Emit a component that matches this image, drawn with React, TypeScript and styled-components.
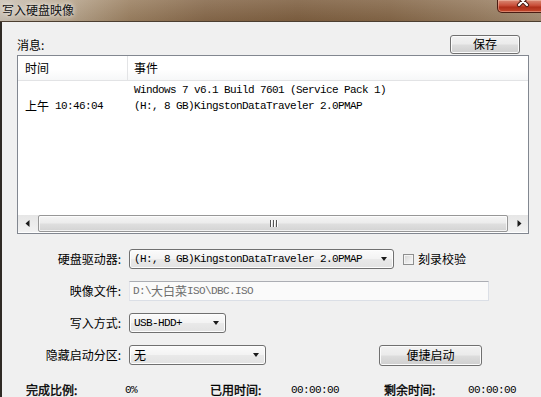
import React from "react";
import styled, { createGlobalStyle } from "styled-components";

const GlobalStyle = createGlobalStyle`
  html, body {
    margin: 0;
    padding: 0;
  }
  body {
    width: 541px;
    height: 397px;
    overflow: hidden;
    background: #f0f0f0;
    font-family: "Noto Sans CJK SC", "Liberation Sans", sans-serif;
    font-size: 12px;
    color: #000;
  }
`;

interface LogRow {
  time: string;
  event: string;
}

const rows: LogRow[] = [
  { time: "", event: "Windows 7 v6.1 Build 7601 (Service Pack 1)" },
  { time: "10:46:04", event: "(H:, 8 GB)KingstonDataTraveler 2.0PMAP" },
];

export default function App() {
  return (
    <>
      <GlobalStyle />
      <Window>
        <TitleBar>
          <Title>写入硬盘映像</Title>
          <CloseButton>
            <svg width="50" height="13" viewBox="0 0 50 13">
              <path d="M22 -2 L30 6 M30 -2 L22 6" stroke="#4a1a10" strokeWidth="4.2" strokeLinecap="round" />
              <path d="M22 -2 L30 6 M30 -2 L22 6" stroke="#fff" strokeWidth="2.2" strokeLinecap="round" />
            </svg>
          </CloseButton>
        </TitleBar>

        <Body>
          <TopRow>
            <Label>消息:</Label>
            <Button $width={70} $height={19}>保存</Button>
          </TopRow>

          <ListBox>
            <ListHeader>
              <HeaderCell $width={110} $divider>时间</HeaderCell>
              <HeaderCell>事件</HeaderCell>
            </ListHeader>
            <ListRows>
              {rows.map((row) => (
                <ListRow key={row.event}>
                  <TimeCell>
                    {row.time && (
                      <>
                        <Cjk>上午</Cjk>
                        <Mono> {row.time}</Mono>
                      </>
                    )}
                  </TimeCell>
                  <EventCell>{row.event}</EventCell>
                </ListRow>
              ))}
            </ListRows>
            <HScroll>
              <ScrollArrow>
                <svg width="5" height="7" viewBox="0 0 5 7">
                  <path d="M4.5 0 L0.5 3.5 L4.5 7 Z" fill="#1a1a1a" />
                </svg>
              </ScrollArrow>
              <ScrollThumb>
                <Grip>
                  <i />
                  <i />
                  <i />
                </Grip>
              </ScrollThumb>
              <ScrollArrow>
                <svg width="5" height="7" viewBox="0 0 5 7">
                  <path d="M0.5 0 L4.5 3.5 L0.5 7 Z" fill="#1a1a1a" />
                </svg>
              </ScrollArrow>
            </HScroll>
          </ListBox>

          <Form>
            <FormRow>
              <FieldLabel>硬盘驱动器:</FieldLabel>
              <Combo $width={265}>
                <Mono>(H:, 8 GB)KingstonDataTraveler 2.0PMAP</Mono>
                <DropArrow />
              </Combo>
              <CheckBox />
              <CheckLabel>刻录校验</CheckLabel>
            </FormRow>
            <FormRow>
              <FieldLabel>映像文件:</FieldLabel>
              <TextField>
                <Mono>D:\</Mono>
                <Cjk>大白菜</Cjk>
                <Mono>ISO\DBC.ISO</Mono>
              </TextField>
            </FormRow>
            <FormRow>
              <FieldLabel>写入方式:</FieldLabel>
              <Combo $width={97}>
                <Mono>USB-HDD+</Mono>
                <DropArrow />
              </Combo>
            </FormRow>
            <FormRow>
              <FieldLabel>隐藏启动分区:</FieldLabel>
              <Combo $width={137}>
                <Cjk>无</Cjk>
                <DropArrow />
              </Combo>
              <Button $width={103} $height={21} $offset={113}>便捷启动</Button>
            </FormRow>
          </Form>

          <StatusRow>
            <StatusLabel>完成比例:</StatusLabel>
            <Mono>0%</Mono>
            <StatusLabel>已用时间:</StatusLabel>
            <Mono>00:00:00</Mono>
            <StatusLabel>剩余时间:</StatusLabel>
            <Mono>00:00:00</Mono>
          </StatusRow>
        </Body>
      </Window>
    </>
  );
}

const Window = styled.div`
  width: 541px;
  height: 397px;
  display: flex;
  flex-direction: column;
  overflow: hidden;
`;

const TitleBar = styled.div`
  flex: none;
  height: 21px;
  display: flex;
  align-items: flex-start;
  justify-content: space-between;
  overflow: hidden;
  background:
    linear-gradient(180deg, rgba(255, 255, 255, 0.12), rgba(0, 0, 0, 0.04)),
    linear-gradient(
      90deg,
      #cbc1b4 0%,
      #b8a68e 12%,
      #9a7f60 24%,
      #86684a 38%,
      #7e5f40 55%,
      #846647 72%,
      #957a5d 88%,
      #a48c72 100%
    );
  border-bottom: 1px solid #4c3e30;
`;

const Title = styled.span`
  padding: 3px 0 0 2px;
  font-size: 12px;
  line-height: 14px;
  color: #111;
  text-shadow: 0 0 4px rgba(255, 255, 255, 0.9), 0 0 8px rgba(255, 255, 255, 0.6);
`;

const CloseButton = styled.div`
  width: 50px;
  height: 13px;
  margin-right: -6px;
  box-sizing: border-box;
  border: 1px solid #4a1c12;
  border-top: none;
  border-radius: 0 0 5px 5px;
  background: linear-gradient(180deg, #d98a75 0%, #c9503a 45%, #b0301a 60%, #c4492e 100%);
  box-shadow: inset 0 0 0 1px rgba(255, 220, 200, 0.4);
  svg {
    display: block;
    margin: -1px 0 0 -1px;
  }
`;

const Body = styled.div`
  flex: 1;
  display: flex;
  flex-direction: column;
  border-left: 2px solid #2f2a25;
  padding: 12px 0 0 15px;
  background: #f0f0f0;
`;

const TopRow = styled.div`
  width: 503px;
  height: 20px;
  display: flex;
  align-items: center;
  justify-content: space-between;
`;

const Label = styled.span`
  font-size: 12px;
  line-height: 14px;
  padding-top: 2px;
`;

const Button = styled.div<{ $width: number; $height: number; $offset?: number }>`
  width: ${(p) => p.$width}px;
  height: ${(p) => p.$height}px;
  margin-left: ${(p) => p.$offset ?? 0}px;
  box-sizing: border-box;
  display: flex;
  align-items: center;
  justify-content: center;
  border: 1px solid #707070;
  border-radius: 3px;
  background: linear-gradient(180deg, #f2f2f2 0%, #ebebeb 48%, #dddddd 52%, #cfcfcf 100%);
  box-shadow: inset 0 0 0 1px #fbfbfb;
  font-size: 12px;
  line-height: 14px;
`;

const ListBox = styled.div`
  width: 512px;
  height: 179px;
  margin-top: 1px;
  box-sizing: border-box;
  border: 1px solid #828790;
  background: #fff;
  display: flex;
  flex-direction: column;
`;

const ListHeader = styled.div`
  flex: none;
  height: 24px;
  display: flex;
  background: linear-gradient(180deg, #ffffff 0%, #ffffff 55%, #f6f7f8 100%);
  border-bottom: 1px solid #e2e3e5;
`;

const HeaderCell = styled.div<{ $width?: number; $divider?: boolean }>`
  ${(p) => (p.$width ? `width: ${p.$width}px; flex: none;` : "flex: 1;")}
  box-sizing: border-box;
  display: flex;
  align-items: center;
  padding-left: ${(p) => (p.$divider ? 7 : 6)}px;
  border-right: ${(p) => (p.$divider ? "1px solid #e3e4e6" : "none")};
  font-size: 12px;
  line-height: 14px;
`;

const ListRows = styled.div`
  flex: 1;
  padding-top: 1px;
  display: flex;
  flex-direction: column;
`;

const ListRow = styled.div`
  height: 16px;
  display: flex;
  align-items: center;
`;

const TimeCell = styled.div`
  width: 110px;
  flex: none;
  box-sizing: border-box;
  padding-left: 7px;
  display: flex;
  align-items: center;
  white-space: pre;
`;

const EventCell = styled.div`
  padding-left: 6px;
  font-family: "Liberation Mono", monospace;
  font-size: 11px;
  letter-spacing: -0.6px;
  line-height: 14px;
  white-space: pre;
`;

const Cjk = styled.span`
  font-family: "Noto Sans CJK SC", sans-serif;
  font-size: 12px;
  line-height: 14px;
`;

const Mono = styled.span`
  font-family: "Liberation Mono", monospace;
  font-size: 11px;
  letter-spacing: -0.6px;
  line-height: 14px;
  white-space: pre;
`;

const HScroll = styled.div`
  flex: none;
  height: 17px;
  margin-bottom: 1px;
  display: flex;
  align-items: stretch;
  background: linear-gradient(180deg, #e6e6e6 0%, #f2f2f2 100%);
`;

const ScrollArrow = styled.div`
  width: 18px;
  flex: none;
  display: flex;
  align-items: center;
  justify-content: center;
`;

const ScrollThumb = styled.div`
  flex: 1;
  margin: 0 2px;
  box-sizing: border-box;
  border: 1px solid #979797;
  border-radius: 2px;
  background: linear-gradient(180deg, #f5f5f5 0%, #ececec 45%, #dedede 55%, #d3d3d3 100%);
  box-shadow: inset 0 0 0 1px rgba(255, 255, 255, 0.7);
  display: flex;
  align-items: center;
  justify-content: center;
`;

const Grip = styled.div`
  display: flex;
  gap: 2px;
  i {
    display: block;
    width: 1px;
    height: 7px;
    background: #555;
    box-shadow: 1px 0 0 #fff;
  }
`;

const Form = styled.div`
  margin-top: 15px;
  display: flex;
  flex-direction: column;
  gap: 12px;
`;

const FormRow = styled.div`
  height: 20px;
  display: flex;
  align-items: center;
`;

const FieldLabel = styled.span`
  width: 104px;
  flex: none;
  margin-right: 8px;
  text-align: right;
  font-size: 12px;
  line-height: 14px;
`;

const Combo = styled.div<{ $width: number }>`
  position: relative;
  width: ${(p) => p.$width}px;
  height: 20px;
  box-sizing: border-box;
  display: flex;
  align-items: center;
  padding-left: 4px;
  border: 1px solid #707070;
  border-radius: 3px;
  background: linear-gradient(180deg, #fbfbfb 0%, #f3f3f3 48%, #e9e9e9 52%, #e2e2e2 100%);
  box-shadow: inset 0 0 0 1px #fdfdfd;
`;

const DropArrow = styled.span`
  position: absolute;
  right: 6px;
  top: 7px;
  width: 0;
  height: 0;
  border-left: 3.5px solid transparent;
  border-right: 3.5px solid transparent;
  border-top: 4px solid #1a1a1a;
`;

const CheckBox = styled.span`
  width: 11px;
  height: 11px;
  margin-left: 9px;
  box-sizing: border-box;
  border: 1px solid #8e8f8f;
  background: linear-gradient(135deg, #d4d4d4 0%, #ececec 60%, #f8f8f8 100%);
  box-shadow: inset 0 0 0 1px #f4f4f4;
`;

const CheckLabel = styled.span`
  margin-left: 4px;
  font-size: 12px;
  line-height: 14px;
`;

const TextField = styled.div`
  width: 360px;
  height: 20px;
  box-sizing: border-box;
  display: flex;
  align-items: center;
  padding-left: 3px;
  border: 1px solid #dbdfe6;
  border-top-color: #abadb3;
  border-left-color: #e2e3ea;
  background: #fafafa;
  color: #6d6d6d;
`;

const StatusRow = styled.div`
  margin-top: 18px;
  padding-left: 9px;
  height: 14px;
  display: grid;
  grid-template-columns: 99px 85px 81px 93px 84px auto;
  align-items: center;
`;

const StatusLabel = styled.span`
  font-size: 12px;
  line-height: 14px;
  font-weight: 400;
  -webkit-text-stroke: 0.35px #000;
`;
